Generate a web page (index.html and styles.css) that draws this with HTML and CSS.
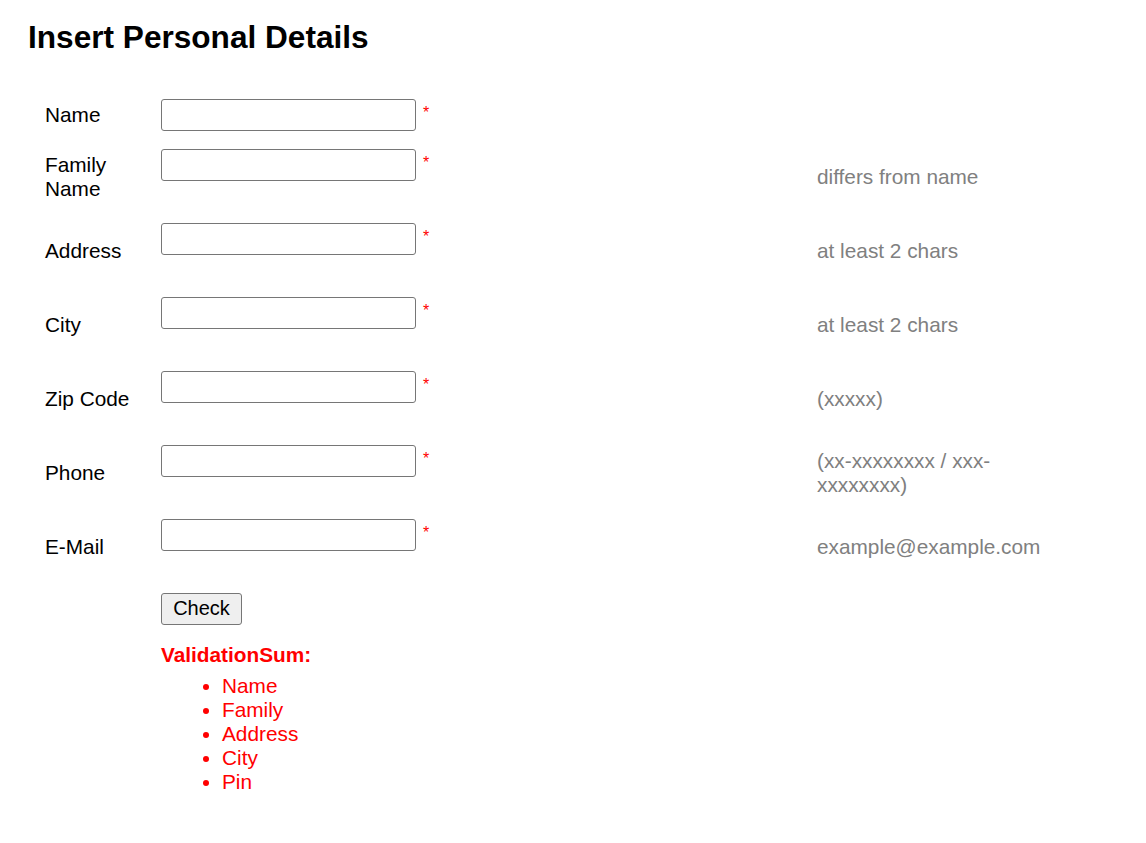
FILE: index.html
```html
<!DOCTYPE html>
<html lang="en">
<head>
<meta charset="utf-8">
<title>Insert Personal Details</title>
<link rel="stylesheet" href="styles.css">
</head>
<body>
<div class="page">
  <h1 class="title">Insert Personal Details</h1>
  <form class="form">
    <div class="row">
      <label class="label">Name</label>
      <div class="field"><input class="input" type="text"><span class="req">*</span></div>
      <div class="hint"></div>
    </div>
    <div class="row">
      <label class="label">Family<br>Name</label>
      <div class="field field-msg"><input class="input" type="text"><span class="req">*</span></div>
      <div class="hint">differs from name</div>
    </div>
    <div class="row">
      <label class="label">Address</label>
      <div class="field field-msg"><input class="input" type="text"><span class="req">*</span></div>
      <div class="hint">at least 2 chars</div>
    </div>
    <div class="row">
      <label class="label">City</label>
      <div class="field field-msg"><input class="input" type="text"><span class="req">*</span></div>
      <div class="hint">at least 2 chars</div>
    </div>
    <div class="row">
      <label class="label">Zip Code</label>
      <div class="field field-msg"><input class="input" type="text"><span class="req">*</span></div>
      <div class="hint">(xxxxx)</div>
    </div>
    <div class="row">
      <label class="label">Phone</label>
      <div class="field field-msg"><input class="input" type="text"><span class="req">*</span></div>
      <div class="hint">(xx-xxxxxxxx / xxx-xxxxxxxx)</div>
    </div>
    <div class="row">
      <label class="label">E-Mail</label>
      <div class="field field-msg"><input class="input" type="text"><span class="req">*</span></div>
      <div class="hint">example@example.com</div>
    </div>
    <div class="row">
      <div class="label"></div>
      <div class="field"><button class="btn" type="button">Check</button></div>
      <div class="hint"></div>
    </div>
    <div class="summary">
      <div class="summary-title">ValidationSum:</div>
      <ul class="summary-list">
        <li>Name</li>
        <li>Family</li>
        <li>Address</li>
        <li>City</li>
        <li>Pin</li>
      </ul>
    </div>
  </form>
</div>
</body>
</html>
```

FILE: styles.css
```css
html, body {
  margin: 0;
  padding: 0;
  background: #ffffff;
}

body {
  font-family: "Liberation Sans", Arial, sans-serif;
  font-size: 20.8px;
  color: #000000;
}

.page {
  padding: 19px 26px 40px 28px;
}

.title {
  margin: 0 0 35px 0;
  font-size: 31.6px;
  font-weight: bold;
  line-height: 36px;
}

.form {
  margin-left: 17px;
}

.row {
  display: grid;
  grid-template-columns: 116px 656px 230px;
  align-items: center;
  padding: 9px 0;
}

.label {
  line-height: 24px;
}

.field {
  display: flex;
  align-items: flex-start;
}

.field-msg {
  padding-bottom: 24px;
}

.input {
  box-sizing: border-box;
  width: 255px;
  height: 32px;
  margin: 0;
  padding: 1px 4px;
  border: 1px solid #767676;
  border-radius: 3px;
  background: #ffffff;
  font-family: "Liberation Sans", Arial, sans-serif;
  font-size: 16px;
}

.req {
  margin: 5px 0 0 7px;
  color: #ff0000;
  font-size: 16px;
  line-height: 18px;
}

.hint {
  color: #808080;
  line-height: 24px;
}

.btn {
  box-sizing: border-box;
  width: 81px;
  height: 32px;
  margin: 0;
  padding: 0 0 2px 0;
  border: 1px solid #767676;
  border-radius: 3px;
  background: #efefef;
  color: #000000;
  font-family: "Liberation Sans", Arial, sans-serif;
  font-size: 20px;
}

.summary {
  margin-left: 116px;
  margin-top: 9px;
  color: #ff0000;
}

.summary-title {
  font-weight: bold;
  line-height: 24px;
}

.summary-list {
  margin: 7px 0 0 0;
  padding-left: 61px;
  line-height: 24px;
}
```
